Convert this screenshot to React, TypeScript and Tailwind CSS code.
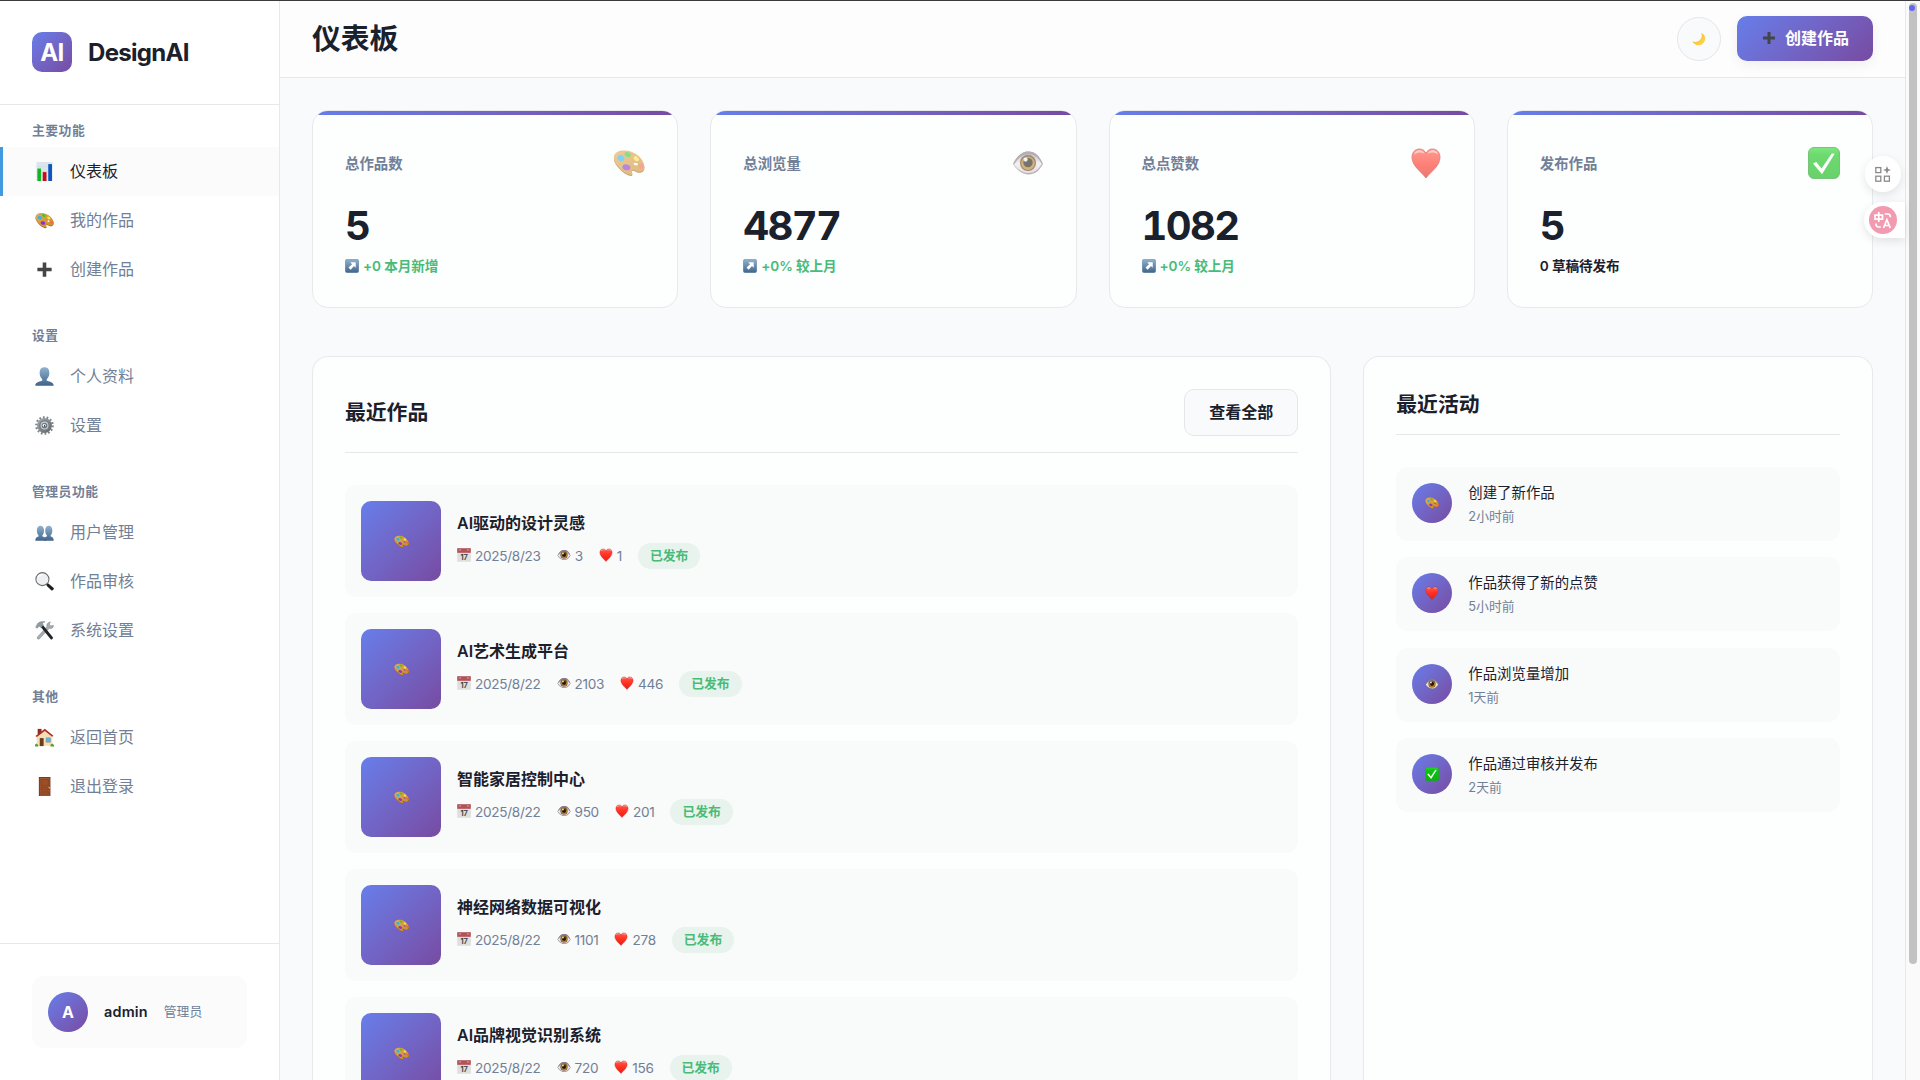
import React from "react";

type IconProps = { className?: string };

function Svg({ className = "", children }: IconProps & { children: React.ReactNode }) {
  return (
    <svg viewBox="0 0 32 32" className={`block shrink-0 ${className}`} aria-hidden="true">
      {children}
    </svg>
  );
}

function Gradients() {
  return (
    <svg className="absolute h-0 w-0" aria-hidden="true">
      <defs>
        <linearGradient id="wood" x1="0" y1="0" x2="1" y2="1">
          <stop offset="0" stopColor="#e3ab55" />
          <stop offset="1" stopColor="#cf8a22" />
        </linearGradient>
        <linearGradient id="steelBlue" x1="0" y1="0" x2="0" y2="1">
          <stop offset="0" stopColor="#8fb3cf" />
          <stop offset="1" stopColor="#3f6489" />
        </linearGradient>
        <linearGradient id="red" x1="0" y1="0" x2="0" y2="1">
          <stop offset="0" stopColor="#ff5a4a" />
          <stop offset="0.5" stopColor="#ff3022" />
          <stop offset="1" stopColor="#e02014" />
        </linearGradient>
        <linearGradient id="green" x1="0" y1="0" x2="0" y2="1">
          <stop offset="0" stopColor="#2fd52f" />
          <stop offset="0.25" stopColor="#0cc40f" />
          <stop offset="1" stopColor="#08b30a" />
        </linearGradient>
        <linearGradient id="eyeWhite" x1="0" y1="0" x2="0" y2="1">
          <stop offset="0" stopColor="#aaa0a6" />
          <stop offset="0.5" stopColor="#f0e8ea" />
          <stop offset="1" stopColor="#d5c9cc" />
        </linearGradient>
        <linearGradient id="moon" x1="0" y1="0" x2="1" y2="1">
          <stop offset="0" stopColor="#f7b52c" />
          <stop offset="1" stopColor="#ffd84d" />
        </linearGradient>
        <linearGradient id="gear" x1="0" y1="0" x2="1" y2="1">
          <stop offset="0" stopColor="#a9b0b5" />
          <stop offset="1" stopColor="#5c6165" />
        </linearGradient>
      </defs>
    </svg>
  );
}

function Palette({ className }: IconProps) {
  return (
    <Svg className={className}>
      <path d="M1 10.500C2 5.500 7 3.500 13 4.300 22 5.300 30 12 31.300 20c.5 4-2.300 6-5.500 5.800-3-.2-4.500-3-6.800-1.800-1.800 1 .8 2.800.4 4.200C18.700 30.400 12 27.500 7.500 23 3 18.600.3 14.500 1 10.500Zm19.300 6.300c-.3 2 4.300 3 4.800.8.300-2.300-4.400-3-4.800-.8Z" fill="#9b651a" />
      <path d="M1 9.600C2 4.600 7 3 13 3.600 22 4.600 30 11 31.300 19c.5 4-2.300 6-5.500 5.800-3-.2-4.500-3-6.800-1.800-1.800 1 .8 2.800.4 4.200C18.700 29.200 12 26.500 7.500 22 3 17.600.3 13.600 1 9.600Zm19.300 7c-.3 2 4.300 3 4.800.8.300-2.300-4.400-3-4.800-.8Z" fill="url(#wood)" />
      <ellipse cx="8" cy="11.200" rx="3.600" ry="3" transform="rotate(35 8 11.200)" fill="#35b3ea" />
      <ellipse cx="14.800" cy="7.600" rx="3.200" ry="2.300" transform="rotate(20 14.800 7.600)" fill="#38ca3c" />
      <ellipse cx="23.300" cy="11.800" rx="3" ry="2.100" transform="rotate(42 23.300 11.800)" fill="#ffe04a" />
      <ellipse cx="28.200" cy="19.300" rx="2.600" ry="2.100" transform="rotate(45 28.200 19.300)" fill="#fa6455" />
      <ellipse cx="13.400" cy="20.300" rx="4" ry="2.900" transform="rotate(12 13.400 20.300)" fill="#8a35d0" />
    </Svg>
  );
}

function Eye({ className }: IconProps) {
  return (
    <Svg className={className}>
      <path d="M1 17C5 9 10 4.500 16.500 4.500 23 4.500 27.500 9 31 17c-4 7-8.500 10.500-14.500 10.500S5 23.500 1 17Z" fill="#8b7f85" />
      <path d="M2 17.800C6 11 10.500 7.300 16.500 7.300c5.800 0 9.700 3.200 13.300 9.700-3.800 6-7.800 9-13.300 9-5.700 0-10.500-2.800-14.500-8.200Z" fill="url(#eyeWhite)" />
      <circle cx="16" cy="16" r="8" fill="#5a3a14" />
      <circle cx="16" cy="16.300" r="6.800" fill="#b98220" />
      <circle cx="16" cy="15.600" r="4.700" fill="#22170f" />
      <circle cx="13.600" cy="12.600" r="2.100" fill="#fff" opacity="0.9" />
      <path d="M1 17C5 9 10 4.500 16.500 4.500 23 4.500 27.500 9 31 17c-4.500-6.500-8.500-10-14.500-10S5.500 11 1 17Z" fill="#857a80" />
    </Svg>
  );
}

function Heart({ className }: IconProps) {
  return (
    <Svg className={className}>
      <path d="M16 31C11 24.500 2 19 2 10.300 2 5.500 5.200 2 9.400 2c3 0 5.300 1.600 6.600 4.200C17.300 3.600 19.600 2 22.600 2 26.800 2 30 5.500 30 10.300 30 19 21 24.500 16 31Z" fill="url(#red)" stroke="#c92318" strokeWidth="0.8" />
      <path d="M4 7.500c1-3 3.200-4.300 5.600-4.200 2.200.1 4 1.400 4.800 3.200-2.800-1.600-7.600-1.600-10.400 1ZM17.700 6.500c.8-1.800 2.600-3.100 4.800-3.200 2.400-.1 4.600 1.200 5.600 4.200-2.800-2.600-7.600-2.600-10.400-1Z" fill="#fff" opacity="0.55" />
    </Svg>
  );
}

function Check({ className }: IconProps) {
  return (
    <Svg className={className}>
      <rect x="0.500" y="0.500" width="31" height="31" rx="5.500" fill="url(#green)" stroke="#1c9f1e" strokeWidth="1" />
      <path d="M5 16.500 8.300 15l5.200 6.500L23.700 6.500l3 .2L14 27.300Z" fill="#fff" />
    </Svg>
  );
}

function Plus({ className }: IconProps) {
  return (
    <Svg className={className}>
      <path d="M13 4h6v9h9v6h-9v9h-6v-9H4v-6h9Z" fill="#434546" />
    </Svg>
  );
}

function BarChart({ className }: IconProps) {
  return (
    <Svg className={className}>
      <rect x="2.500" y="0" width="27" height="32" fill="#dbe6ec" />
      <path d="M2.500 8h27M2.500 16h27M2.500 24h27" stroke="#c3d2db" strokeWidth="0.8" />
      <rect x="4" y="11" width="6" height="21" fill="#0db81c" />
      <rect x="13" y="17" width="6.300" height="15" fill="#cc0b12" />
      <rect x="22.300" y="3.500" width="6.300" height="28.500" fill="#0c55c0" />
    </Svg>
  );
}

function Person({ className }: IconProps) {
  return (
    <Svg className={className}>
      <path d="M.5 31.500c0-5.500 5-6.600 11-8.500 1.300-.5 1-2.300.4-3C9.300 17.500 7.800 14 7.800 9.500 7.800 3.500 11 .5 16 .5s8.200 3 8.200 9c0 4.500-1.500 8-4.100 10.500-.6.700-.9 2.500.4 3 6 1.900 11 3 11 8.500Z" fill="url(#steelBlue)" />
    </Svg>
  );
}

function People({ className }: IconProps) {
  return (
    <Svg className={className}>
      <path d="M15 30c0-5 1.500-6 4.500-7.300 1-.4.8-1.500.3-2.200-1.700-2-2.600-4.600-2.600-7.900 0-4.800 2.400-7.900 6-7.900s6 3.100 6 7.900c0 3.300-.9 5.900-2.600 7.900-.5.700-.7 1.800.3 2.200 3.300 1.100 4.600 2.800 4.600 7.300Z" fill="url(#steelBlue)" />
      <path d="M.5 30c0-5 2-6.200 5-7.300 1-.4.8-1.500.3-2.200-1.700-2-2.600-4.600-2.600-7.900 0-4.800 2.400-7.900 6-7.900s6 3.100 6 7.900c0 3.300-.9 5.900-2.600 7.900-.5.700-.7 1.800.3 2.200 3.300 1.100 6.100 2.300 6.100 7.300Z" fill="url(#steelBlue)" />
    </Svg>
  );
}

function Gear({ className }: IconProps) {
  return (
    <Svg className={className}>
      <circle cx="16" cy="16" r="13.700" fill="none" stroke="#7d8386" strokeWidth="4" strokeDasharray="2.900 3.250" />
      <circle cx="16" cy="16" r="12.500" fill="url(#gear)" />
      <circle cx="16" cy="16" r="9" fill="#777c80" />
      <circle cx="16" cy="16" r="6.600" fill="#c3d3dc" />
      <circle cx="16" cy="16" r="4.800" fill="#6f757a" />
      <circle cx="15.500" cy="15.500" r="2.600" fill="#eef3f5" />
      <path d="M16 15v3" stroke="#2a2a2a" strokeWidth="1.500" />
    </Svg>
  );
}

function Magnifier({ className }: IconProps) {
  return (
    <Svg className={className}>
      <path d="m19 18 3.500 1.500 9 7.500c.8 1.800-1.800 4.800-3.700 4L20 23.500 18 19Z" fill="#1d1d1f" />
      <circle cx="12.500" cy="12" r="11" fill="#eef0f1" stroke="#6b6d70" strokeWidth="1.800" />
      <path d="M5 9c1.500-3.500 5-5 8.500-4.500" stroke="#fff" strokeWidth="2" fill="none" />
    </Svg>
  );
}

function Tools({ className }: IconProps) {
  return (
    <Svg className={className}>
      <path d="M24 12 7.500 30c-2 1.800-5-.6-3.400-3L20 9.500c-.8-4 1.800-7.500 6-8l-2 4 2.500 3 4.500-1c.2 4-3 6-7 4.500Z" fill="#a8adb2" stroke="#6f7479" strokeWidth="0.800" />
      <path d="m9.500 9.500 3.500-3L30 27.500c1 2-1.500 4.500-3.600 3.200Z" fill="#222326" />
      <path d="M1 10.500 4.500 4C7.500 1 12 .7 17 1.300l-4.500 2.200 1.500 3.700-4 3.800-3-2.200-3.300 3.600Z" fill="#8e9ba5" stroke="#697178" strokeWidth="0.600" />
    </Svg>
  );
}

function House({ className }: IconProps) {
  return (
    <Svg className={className}>
      <path d="M4.500 1.500h6.500v9H4.500Z" fill="#8e2b22" />
      <path d="M3 14 17 4l12 10v16H3Z" fill="#f2dfb5" />
      <path d="M.8 13.500 16.500 1.200 31 13l-2 1.800L16.500 5 3 15.300Z" fill="#b02c28" />
      <rect x="8" y="17" width="6.500" height="13.500" fill="#6d3b1e" />
      <rect x="18.500" y="16.500" width="8" height="7.500" fill="#5ab0ea" stroke="#b89a68" strokeWidth="0.800" />
      <path d="M0 31v-3l2.500-2 3 2.500V31ZM26 31v-3l3-2 3 2.500V31Z" fill="#58a031" />
    </Svg>
  );
}

function Door({ className }: IconProps) {
  return (
    <Svg className={className}>
      <rect x="6.500" y="0" width="19.500" height="32" fill="#74381e" />
      <rect x="8" y="1.500" width="16.500" height="30.500" fill="#a4572f" />
      <path d="M10 4h12.500v11H10ZM10 17.500h12.500v4.500H10ZM10 25h12.500v5H10Z" fill="#9a4f29" stroke="#7e3c1d" strokeWidth="1" />
      <circle cx="24" cy="18" r="1.300" fill="#f1c34b" />
    </Svg>
  );
}

function Calendar({ className }: IconProps) {
  return (
    <Svg className={className}>
      <rect x="0.500" y="0.500" width="31" height="31" fill="#dfdfdf" />
      <rect x="0.500" y="0.500" width="31" height="10.500" fill="#b2535a" />
      <path d="M7 3v3M25 3v3" stroke="#f1dcdc" strokeWidth="2" />
      <text x="16" y="27.500" textAnchor="middle" fontFamily="Inter, sans-serif" fontSize="17" fontWeight="600" fill="#333">17</text>
    </Svg>
  );
}

function ArrowBox({ className }: IconProps) {
  return (
    <Svg className={className}>
      <rect x="0.500" y="0.500" width="31" height="31" rx="5" fill="url(#steelBlue)" stroke="#54789a" />
      <path d="M12 7.500h12.500V20l-4-3.800-7.500 8.300-5-5 8.200-7.700Z" fill="#fff" />
    </Svg>
  );
}

function Moon({ className }: IconProps) {
  return (
    <Svg className={className}>
      <path d="M21 1.500c7.500 3.500 10.500 11 8.500 18C27 28 18 32 10 29.500 5.500 28 2.500 25 1 21c6 2.800 12.500 2 17-2.500C22.500 13.800 23.500 7.500 21 1.500Z" fill="url(#moon)" />
    </Svg>
  );
}

type NavItem = { label: string; Icon: (p: IconProps) => React.JSX.Element; active?: boolean };

const sections: { title: string; items: NavItem[] }[] = [
  {
    title: "主要功能",
    items: [
      { label: "仪表板", Icon: BarChart, active: true },
      { label: "我的作品", Icon: Palette },
      { label: "创建作品", Icon: Plus },
    ],
  },
  {
    title: "设置",
    items: [
      { label: "个人资料", Icon: Person },
      { label: "设置", Icon: Gear },
    ],
  },
  {
    title: "管理员功能",
    items: [
      { label: "用户管理", Icon: People },
      { label: "作品审核", Icon: Magnifier },
      { label: "系统设置", Icon: Tools },
    ],
  },
  {
    title: "其他",
    items: [
      { label: "返回首页", Icon: House },
      { label: "退出登录", Icon: Door },
    ],
  },
];

const stats = [
  { label: "总作品数", value: "5", change: "+0 本月新增", up: true, Icon: Palette },
  { label: "总浏览量", value: "4877", change: "+0% 较上月", up: true, Icon: Eye },
  { label: "总点赞数", value: "1082", change: "+0% 较上月", up: true, Icon: Heart },
  { label: "发布作品", value: "5", change: "0 草稿待发布", up: false, Icon: Check },
];

const works = [
  { title: "AI驱动的设计灵感", date: "2025/8/23", views: 3, likes: 1 },
  { title: "AI艺术生成平台", date: "2025/8/22", views: 2103, likes: 446 },
  { title: "智能家居控制中心", date: "2025/8/22", views: 950, likes: 201 },
  { title: "神经网络数据可视化", date: "2025/8/22", views: 1101, likes: 278 },
  { title: "AI品牌视觉识别系统", date: "2025/8/22", views: 720, likes: 156 },
];

const activities = [
  { text: "创建了新作品", time: "2小时前", Icon: Palette },
  { text: "作品获得了新的点赞", time: "5小时前", Icon: Heart },
  { text: "作品浏览量增加", time: "1天前", Icon: Eye },
  { text: "作品通过审核并发布", time: "2天前", Icon: Check },
];

function Sidebar() {
  return (
    <aside className="flex h-full w-[280px] shrink-0 flex-col border-r border-[#e8e8ea] bg-white">
      <div className="flex h-[104px] shrink-0 items-center gap-4 border-b border-[#e8e8ea] px-8 pb-0.5">
        <div className="flex size-10 items-center justify-center rounded-[10px] bg-linear-135 from-[#667eea] to-[#764ba2] pt-0.5 text-2xl font-bold tracking-[-0.6px] text-white">
          AI
        </div>
        <span className="pt-0.5 text-2xl font-bold tracking-[-0.68px]">DesignAI</span>
      </div>
      <nav className="flex flex-1 flex-col gap-8 pt-4">
        {sections.map((s) => (
          <div key={s.title}>
            <div className="mb-2 h-[18px] px-8 text-[12.8px] leading-[19px] font-semibold tracking-[0.5px] text-[#718096]">
              {s.title}
            </div>
            {s.items.map(({ label, Icon, active }) => (
              <div
                key={label}
                className={
                  active
                    ? "flex h-[49px] items-center border-l-[3px] border-[#4299e1] bg-[#fbfbfb] pl-8 text-[#1a202c]"
                    : "flex h-[49px] items-center border-l-[3px] border-transparent pl-8 text-[#718096]"
                }
              >
                <Icon className="mr-4 size-[19px]" />
                <span className="mb-px text-base leading-6">{label}</span>
              </div>
            ))}
          </div>
        ))}
      </nav>
      <div className="border-t border-[#e8e8ea] p-8">
        <div className="flex h-[72px] items-center gap-4 rounded-xl bg-[#fbfbfb] px-4">
          <div className="flex size-10 items-center justify-center rounded-full bg-linear-135 from-[#667eea] to-[#764ba2] text-base font-bold text-white">
            A
          </div>
          <span className="text-[14.4px] font-semibold tracking-[0.2px]">admin</span>
          <span className="text-[12.8px] text-[#718096]">管理员</span>
        </div>
      </div>
    </aside>
  );
}

function Header() {
  return (
    <header className="flex h-[77px] shrink-0 items-center justify-between border-b border-[#e8e8ea] bg-[#fdfdfe] px-8 pb-px">
      <h1 className="text-[28.8px] leading-9 font-bold">仪表板</h1>
      <div className="flex items-center gap-4">
        <div className="mt-px flex size-11 items-center justify-center rounded-full border border-[#e5e6e9] bg-[#f9fafc]">
          <Moon className="size-[14px]" />
        </div>
        <div className="flex h-[45px] w-[136px] items-center rounded-[10px] bg-linear-135 from-[#667eea] to-[#764ba2] pb-0.5 pl-6 font-semibold text-white shadow-[0_4px_12px_rgba(0,0,0,0.06)]">
          <Plus className="mr-2 size-4" />
          <span className="text-base leading-6">创建作品</span>
        </div>
      </div>
    </header>
  );
}

function StatCard({ label, value, change, up, Icon }: (typeof stats)[number]) {
  return (
    <div className="flex h-[198px] flex-col overflow-hidden rounded-2xl border border-[#e8e9eb] bg-[#fdfefe]">
      <div className="h-1 shrink-0 bg-linear-90 from-[#667eea] to-[#764ba2]" />
      <div className="flex flex-col px-8 pt-[30px]">
        <div className="flex h-9 items-center justify-between">
          <span className="pt-0.5 text-[14.4px] leading-5 font-semibold text-[#718096]">{label}</span>
          <Icon className="size-8 opacity-60" />
        </div>
        <div className="mt-[25px] h-10 text-[40px] leading-10 font-bold tracking-[-1.6px] tabular-nums">{value}</div>
        <div
          className={
            up
              ? "mt-[10px] flex h-5 items-center gap-1 text-[13.6px] leading-5 font-semibold tracking-[-0.1px] text-[#48bb78]"
              : "mt-[10px] flex h-5 items-center gap-1 text-[13.6px] leading-5 font-semibold tracking-[-0.1px] text-[#1a202c]"
          }
        >
          {up && <ArrowBox className="mb-px size-[14px]" />}
          <span>{change}</span>
        </div>
      </div>
    </div>
  );
}

function RecentWorks() {
  return (
    <section className="flex min-w-0 flex-col rounded-t-2xl border border-b-0 border-[#e8e9eb] bg-[#fdfefe] px-8 pt-8">
      <div className="flex h-16 shrink-0 items-start justify-between border-b border-[#e5e7e8]">
        <h2 className="text-[20.8px] leading-[47px] font-bold">最近作品</h2>
        <div className="flex h-[47px] w-[114px] items-center justify-center rounded-[10px] border border-[#e5e6e9] bg-[#f9fafc] pb-px text-base font-semibold">
          查看全部
        </div>
      </div>
      <div className="mt-8 flex flex-col gap-4">
        {works.map((w) => (
          <div key={w.title} className="flex h-28 shrink-0 items-center gap-4 rounded-xl bg-[#f9fafa] p-4">
            <div className="flex size-20 items-center justify-center rounded-[10px] bg-linear-135 from-[#667eea] to-[#764ba2]">
              <Palette className="size-[15px]" />
            </div>
            <div className="mb-px flex flex-col gap-[9px]">
              <div className="text-base leading-[22px] font-semibold">{w.title}</div>
              <div className="flex h-[26px] items-center gap-4 text-[13.6px] tracking-[-0.3px] text-[#718096]">
                <span className="flex items-center gap-1">
                  <Calendar className="mb-0.5 size-[14px]" />
                  {w.date}
                </span>
                <span className="flex items-center gap-1">
                  <Eye className="mb-0.5 size-[14px]" />
                  {w.views}
                </span>
                <span className="flex items-center gap-1">
                  <Heart className="mb-0.5 size-[14px]" />
                  {w.likes}
                </span>
                <span className="flex h-[26px] items-center rounded-full bg-[#e8f3ed] px-3 text-[12.8px] font-semibold tracking-normal text-[#48bb78]">
                  已发布
                </span>
              </div>
            </div>
          </div>
        ))}
      </div>
    </section>
  );
}

function RecentActivity() {
  return (
    <section className="flex min-w-0 flex-col rounded-t-2xl border border-b-0 border-[#e8e9eb] bg-[#fdfefe] px-8 pt-8">
      <div className="h-[46px] shrink-0 border-b border-[#e5e7e8]">
        <h2 className="text-[20.8px] leading-[31px] font-bold">最近活动</h2>
      </div>
      <div className="mt-8 flex flex-col gap-[16.3px]">
        {activities.map(({ text, time, Icon }) => (
          <div key={text} className="flex h-[74px] items-start gap-4 rounded-xl bg-[#f9fafa] p-4">
            <div className="flex size-10 items-center justify-center rounded-full bg-linear-135 from-[#667eea] to-[#764ba2]">
              <Icon className="size-[14px]" />
            </div>
            <div>
              <div className="text-[14.4px] leading-5">{text}</div>
              <div className="mt-1 text-[12.8px] leading-5 text-[#718096]">{time}</div>
            </div>
          </div>
        ))}
      </div>
    </section>
  );
}

function FloatingTools() {
  return (
    <>
      <div className="absolute top-[155px] left-[1865px] flex size-9 items-center justify-center rounded-full bg-white/95 shadow-[0_3px_10px_rgba(0,0,0,0.1)]">
        <svg viewBox="0 0 16 16" className="size-4" fill="none" stroke="#8a8a8a" strokeWidth="1.300">
          <rect x="0.800" y="1.600" width="5" height="5" />
          <rect x="0.800" y="10.200" width="5" height="5" />
          <rect x="9.400" y="10.200" width="5" height="5" />
          <path d="M12 0 13.100 2.900 16 4l-2.900 1.100L12 8l-1.100-2.900L8 4l2.900-1.100Z" fill="#8a8a8a" stroke="none" />
        </svg>
      </div>
      <div className="absolute top-[201px] left-[1864px] flex h-9 w-[41px] items-center rounded-l-full bg-white pl-[5px] shadow-[0_3px_10px_rgba(0,0,0,0.1)]">
        <svg viewBox="0 0 28 28" className="size-7" fill="none" stroke="#fff" strokeWidth="1.700">
          <circle cx="14" cy="14" r="14" fill="#f19ab0" stroke="none" />
          <path d="M6 9.200h7.500v4H6ZM9.750 6v10" />
          <path d="M15.800 8h3a2.500 2.500 0 0 1 2.500 2.500v.8M7 17.500v1a2.500 2.500 0 0 0 2.500 2.500h2.300" />
          <path d="m14.500 22 3.400-8.300L21.300 22M15.800 19.500H20" />
        </svg>
      </div>
    </>
  );
}

export default function App() {
  return (
    <div className="relative flex h-[1080px] w-[1920px] flex-col overflow-hidden border-t border-[#3c3c3e] bg-[#f9fafc] font-[Inter,'Noto_Sans_CJK_SC',sans-serif] text-[#1a202c]">
      <Gradients />
      <div className="flex min-h-0 flex-1">
        <Sidebar />
        <main className="flex w-[1625px] shrink-0 flex-col">
          <Header />
          <div className="flex min-h-0 flex-1 flex-col px-8 pt-8">
            <div className="grid shrink-0 grid-cols-4 gap-8">
              {stats.map((s) => (
                <StatCard key={s.label} {...s} />
              ))}
            </div>
            <div className="mt-12 grid min-h-0 flex-1 grid-cols-[2fr_1fr] gap-8">
              <RecentWorks />
              <RecentActivity />
            </div>
          </div>
        </main>
        <div className="flex flex-1 border-l border-[#e8e8e8] bg-[#fafafa] pt-0.5 pl-[3px]">
          <div className="h-[961px] w-2 rounded-full bg-[#c2c2c2] pt-0.5">
            <div className="size-1.5 rounded-full bg-[#6366f1]" />
          </div>
        </div>
      </div>
      <FloatingTools />
    </div>
  );
}
